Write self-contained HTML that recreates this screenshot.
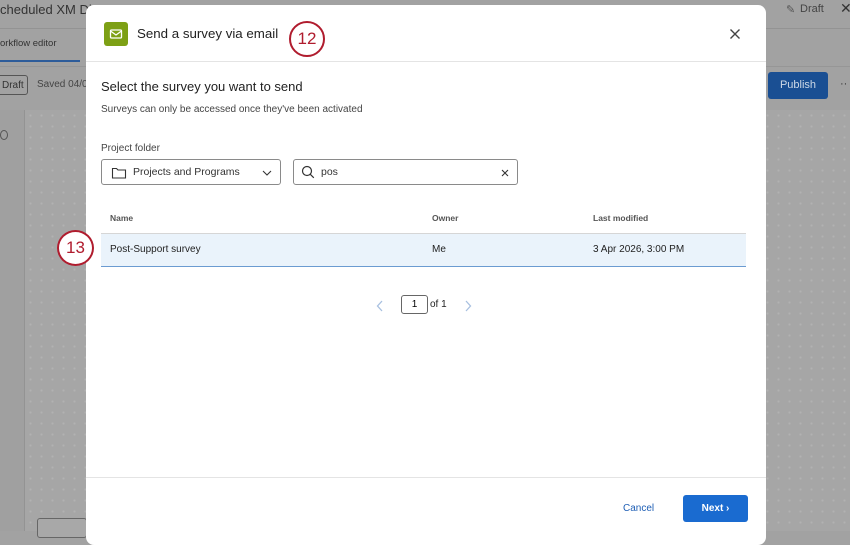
<!DOCTYPE html>
<html><head><meta charset="utf-8"><style>
*{box-sizing:border-box;margin:0;padding:0}
body{width:850px;height:531px;overflow:hidden;position:relative;font-family:"Liberation Sans",sans-serif;background:#a2a2a2}
.bgtop{position:absolute;left:0;top:0;width:850px;height:29px;background:#a2a2a2;border-bottom:1px solid #939393}
.canvas{position:absolute;left:25px;top:110px;right:0;bottom:0;background-color:#a6a6a6;background-image:radial-gradient(#b2b2b2 1px,transparent 1.2px);background-size:11px 11px}
.strip{position:absolute;left:0;top:110px;width:25px;bottom:0;background:#a0a0a0;border-right:1px solid #939393}
.modal{position:absolute;left:86px;top:5px;width:680px;height:540px;background:#fff;border-radius:8px}
.hdr{height:57px;border-bottom:1px solid #e4e4e4;position:relative}
.ico{position:absolute;left:18px;top:17px;width:24px;height:24px;background:#7da015;border-radius:3px}
.title{position:absolute;left:51px;top:21px;font-size:13.3px;color:#222}
.badge{position:absolute;border:2.5px solid #b01c2e;border-radius:50%;color:#b01c2e;font-size:17px;text-align:center;background:#fff}
.t{position:absolute;color:#222}
.field{position:absolute;height:26px;border:1px solid #8a8a8a;border-radius:3px;font-size:10.5px;color:#333}
.row{position:absolute;left:15px;width:645px}
.footer{position:absolute;left:0;top:472px;width:680px;border-top:1px solid #e4e4e4}
</style></head><body>
<div class="bgtop"></div>
<div class="t" style="left:0;top:2px;font-size:13px;color:#333">cheduled XM Dir</div>
<div class="t" style="left:0;top:38px;font-size:9.5px;color:#333">orkflow editor</div>
<div style="position:absolute;left:0;top:60px;width:80px;height:2px;background:#2d5c9a"></div>
<div style="position:absolute;left:0;top:66px;width:850px;height:1px;background:#969696"></div>
<div style="position:absolute;left:-4px;top:75px;width:32px;height:20px;border:1px solid #555;border-radius:3px;font-size:10px;padding:4px 0 0 5px;color:#333">Draft</div>
<div class="t" style="left:37px;top:79px;font-size:10px;color:#444">Saved 04/0</div>
<div class="strip"></div><div class="canvas"></div>
<div style="position:absolute;left:768px;top:72px;width:60px;height:27px;background:#1a4f93;border-radius:3px;color:#cdd8e6;font-size:11px;text-align:center;line-height:27px">Publish</div>
<div class="t" style="left:840px;top:78px;font-size:11px;color:#333">··</div>
<div class="t" style="left:800px;top:3px;font-size:11px;color:#444">Draft</div>
<div class="t" style="left:786px;top:3px;font-size:11px;color:#555">✎</div>
<div class="t" style="left:840px;top:0px;font-size:14px;color:#333">✕</div>
<div style="position:absolute;left:37px;top:518px;width:50px;height:20px;border:1px solid #666;border-radius:3px;background:#a8a8a8"></div>
<div style="position:absolute;left:0;top:130px;width:8px;height:10px;border:1px solid #555;border-radius:50%"></div>

<div class="modal">
 <div class="hdr">
  <div class="ico"><svg width="24" height="24"><rect x="6.5" y="8" width="11" height="8" rx="1" fill="none" stroke="#fff" stroke-width="1.3"/><path d="M6.5 9l5.5 4 5.5-4" fill="none" stroke="#fff" stroke-width="1.3"/></svg></div>
  <div class="title">Send a survey via email</div>
  <div class="badge" style="left:203px;top:16px;width:36px;height:36px;line-height:31px">12</div>
  <svg style="position:absolute;left:643px;top:23px" width="12" height="12"><path d="M1.5 1.5l9 9M10.5 1.5l-9 9" stroke="#444" stroke-width="1.4"/></svg>
 </div>
 <div class="t" style="left:15px;top:74px;font-size:13px">Select the survey you want to send</div>
 <div class="t" style="left:15px;top:99px;font-size:10px;color:#444">Surveys can only be accessed once they've been activated</div>
 <div class="t" style="left:15px;top:138px;font-size:10px;color:#444">Project folder</div>
 <div class="field" style="left:15px;top:154px;width:180px">
  <svg style="position:absolute;left:9px;top:6px" width="16" height="14"><path d="M1.5 2.5h4l1.5 1.5h7.5v8h-13z" fill="none" stroke="#333" stroke-width="1.1"/></svg>
  <span style="position:absolute;left:31px;top:6px">Projects and Programs</span>
  <svg style="position:absolute;left:160px;top:10px" width="10" height="6"><path d="M1 1l4 4 4-4" fill="none" stroke="#333" stroke-width="1.1"/></svg>
 </div>
 <div class="field" style="left:207px;top:154px;width:225px">
  <svg style="position:absolute;left:7px;top:5px" width="14" height="14"><circle cx="6" cy="6" r="4.5" fill="none" stroke="#333" stroke-width="1.2"/><path d="M9.3 9.3l3.5 3.5" stroke="#333" stroke-width="1.2"/></svg>
  <span style="position:absolute;left:27px;top:6px">pos</span>
  <svg style="position:absolute;left:207px;top:9px" width="8" height="8"><path d="M1 1l6 6M7 1l-6 6" stroke="#333" stroke-width="1.1"/></svg>
 </div>
 <div class="t" style="left:24px;top:208px;font-size:8.5px;color:#555;font-weight:bold">Name</div>
 <div class="t" style="left:346px;top:208px;font-size:8.5px;color:#555;font-weight:bold">Owner</div>
 <div class="t" style="left:507px;top:208px;font-size:8.5px;color:#555;font-weight:bold">Last modified</div>
 <div class="row" style="top:228px;height:34px;background:#eaf3fb;border-top:1px solid #d6d6d6;border-bottom:1px solid #6b9bd1"></div>
 <div class="t" style="left:24px;top:239px;font-size:10px">Post-Support survey</div>
 <div class="t" style="left:346px;top:239px;font-size:10px">Me</div>
 <div class="t" style="left:507px;top:239px;font-size:10px">3 Apr 2026, 3:00 PM</div>
 <svg style="position:absolute;left:290px;top:295px" width="8" height="12"><path d="M6 1L1.5 6 6 11" fill="none" stroke="#a8c0e0" stroke-width="1.3"/></svg>
 <div style="position:absolute;left:315px;top:290px;width:27px;height:19px;border:1px solid #666;border-radius:3px;font-size:10px;text-align:center;line-height:17px">1</div>
 <div class="t" style="left:344px;top:294px;font-size:10px">of 1</div>
 <svg style="position:absolute;left:378px;top:295px" width="8" height="12"><path d="M2 1l4.5 5L2 11" fill="none" stroke="#a8c0e0" stroke-width="1.3"/></svg>
 <div class="footer"></div>
 <div class="t" style="left:537px;top:498px;font-size:10px;color:#1f5fb5">Cancel</div>
 <div style="position:absolute;left:597px;top:490px;width:65px;height:27px;background:#1a6bd0;border-radius:3px;color:#fff;font-size:10px;font-weight:bold;line-height:27px;text-align:center">Next ›</div>
</div>
<div class="badge" style="left:57px;top:230px;width:37px;height:36px;line-height:31px">13</div>
</body></html>
